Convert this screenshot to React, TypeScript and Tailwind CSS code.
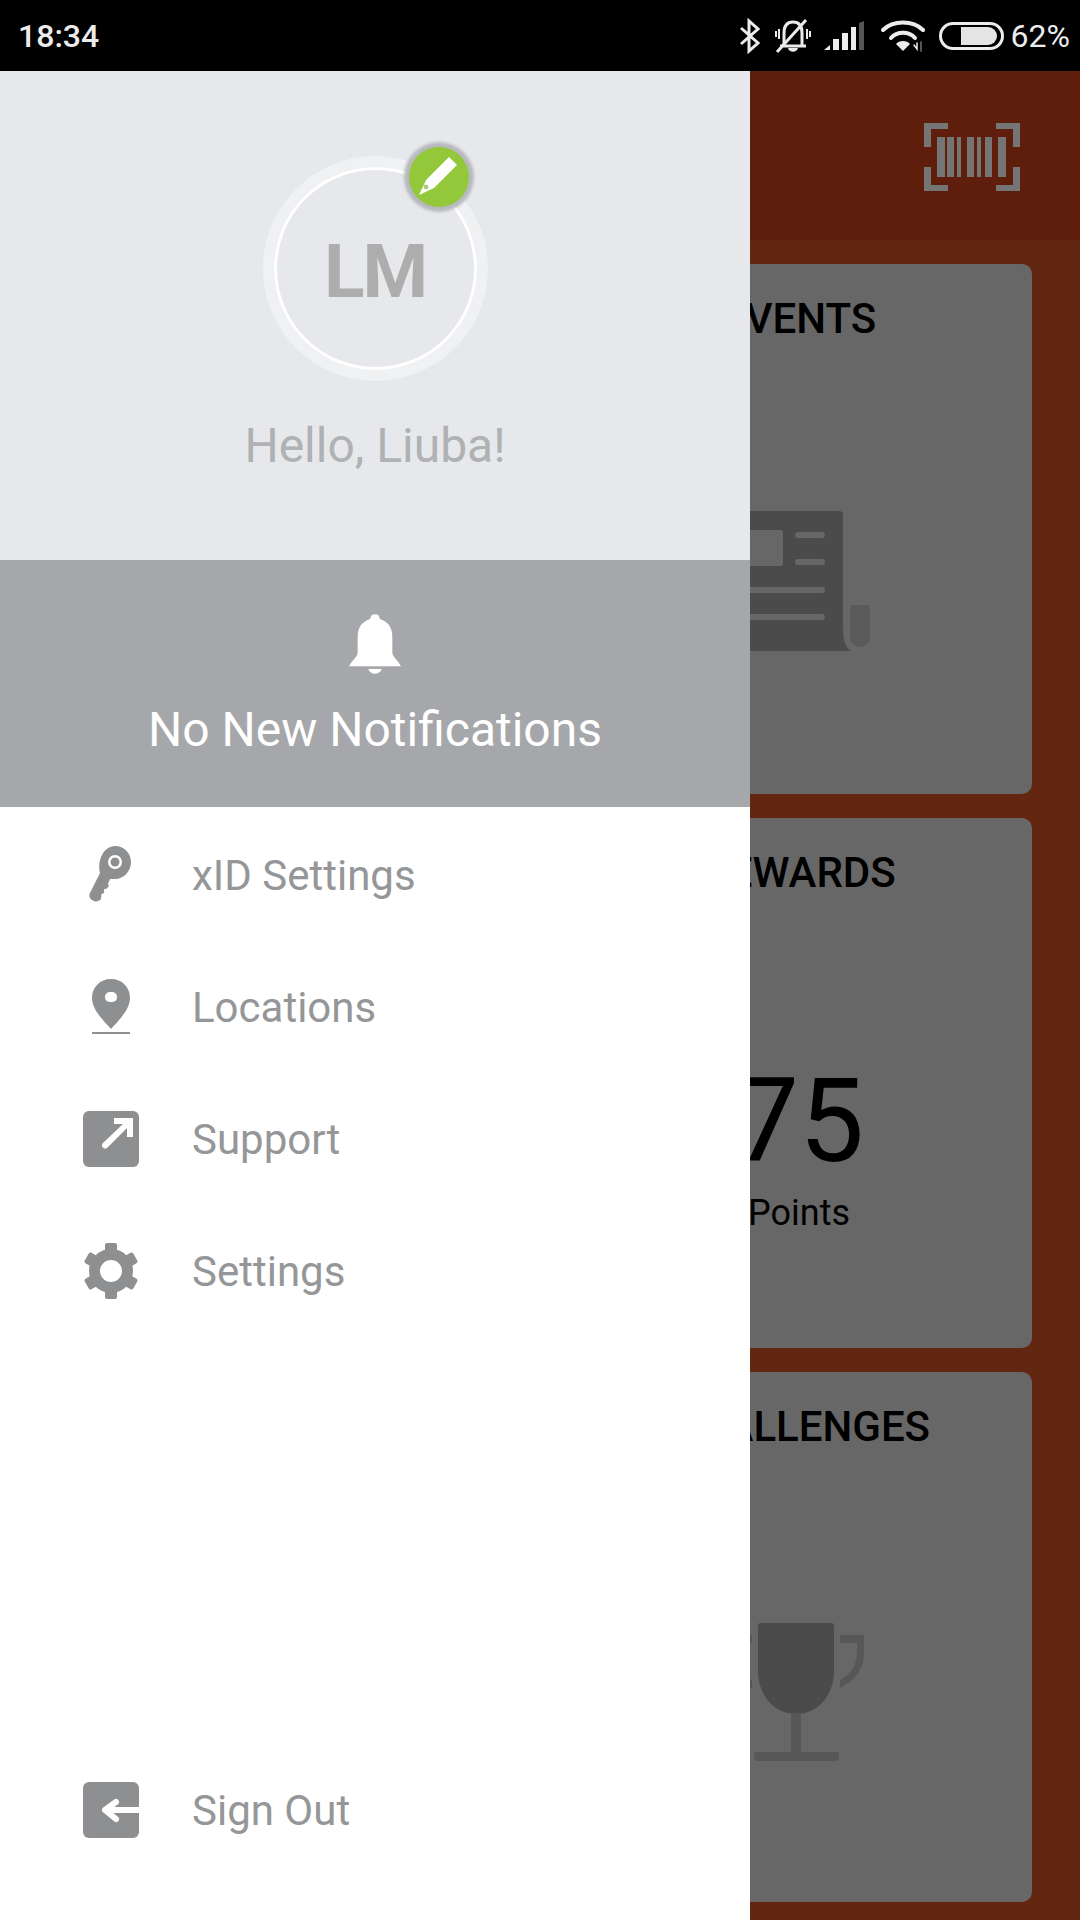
import type { ReactNode } from 'react'

function StatusIcons() {
  return (
    <div className="flex items-center">
      <svg width="22" height="36" viewBox="0 0 22 36" className="mr-[14px]" fill="none" stroke="#ececec" strokeWidth="3">
        <path d="M2 10 L19 25 L10 33 V3 L19 11 L2 26" />
      </svg>
      <svg width="36" height="34" viewBox="0 0 36 34" className="mr-[12px]" fill="none" stroke="#ececec" strokeWidth="3">
        <path d="M9 26 V14 C9 7 12 3 18 3 C24 3 27 7 27 14 V26" />
        <path d="M5 27 H31" />
        <path d="M13 29 C14 34 22 34 23 29" fill="#ececec" stroke="none" />
        <path d="M2 33 L31 1" />
        <path d="M4 10 V20 M1 12 V18 M32 10 V20 M35 12 V18" strokeWidth="2" />
      </svg>
      <svg width="42" height="30" viewBox="0 0 42 30" className="mr-[16px]">
        <path d="M1 29 L7 24 V29 Z" fill="#ececec" />
        <rect x="10" y="18" width="6" height="11" fill="#ececec" />
        <rect x="19" y="12" width="6" height="17" fill="#ececec" />
        <rect x="28" y="6" width="5" height="23" fill="#ececec" />
        <path d="M36 2 L41 0 V29 H36 Z" fill="#555" />
      </svg>
      <svg width="44" height="32" viewBox="0 0 44 32" className="mr-[14px]" fill="none" stroke="#ececec" strokeWidth="4" strokeLinecap="round">
        <path d="M2 10 C12 0 32 0 42 10" />
        <path d="M10 18 C16 11 28 11 34 18" />
        <path d="M22 31 L15 24 C18 20 26 20 29 24 Z" fill="#ececec" stroke="none" />
        <path d="M33 25 L36 29 V23" strokeWidth="1.5" />
        <path d="M40 22 V31" stroke="#555" strokeWidth="2" />
      </svg>
      <div className="mr-[7px] flex h-[28px] w-[65px] items-center justify-end rounded-full border-[3px] border-[#ececec] pr-[4px]">
        <div className="h-[18px] w-[36px] rounded-l-[3px] rounded-r-full bg-[#e4e4e4]" />
      </div>
      <span className="text-[32px] leading-none text-[#ececec]">62%</span>
    </div>
  )
}

function Barcode() {
  return (
    <svg width="96" height="68" viewBox="0 0 96 68" fill="#757575">
      <path d="M0 0 H24 V6 H7 V24 H0 Z M72 0 H96 V24 H89 V6 H72 Z M0 44 H7 V62 H24 V68 H0 Z M89 44 H96 V68 H72 V62 H89 Z" />
      <rect x="13" y="14" width="8" height="40" />
      <rect x="23" y="14" width="7" height="40" />
      <rect x="33" y="14" width="4" height="40" />
      <rect x="43" y="14" width="7" height="40" />
      <rect x="53" y="14" width="4" height="40" />
      <rect x="61" y="14" width="7" height="40" />
      <rect x="74" y="14" width="8" height="40" />
    </svg>
  )
}

function NewsIcon() {
  return (
    <svg width="138" height="140" viewBox="0 0 138 140" className="block">
      <path d="M4 0 H107 a4 4 0 0 1 4 4 V118 C111 128 113 136 119 140 H4 a4 4 0 0 1 -4 -4 V4 a4 4 0 0 1 4 -4 Z" fill="#4b4b4b" />
      <rect x="10" y="19" width="41" height="36" rx="2" fill="#676767" />
      <rect x="63" y="21" width="30" height="6" rx="3" fill="#676767" />
      <rect x="63" y="48" width="30" height="6" rx="3" fill="#676767" />
      <rect x="10" y="76" width="83" height="6" rx="3" fill="#676767" />
      <rect x="10" y="103" width="83" height="6" rx="3" fill="#676767" />
      <path d="M118 97 a3 3 0 0 1 3 -3 H135 a3 3 0 0 1 3 3 V126 a10 10 0 0 1 -20 0 Z" fill="#5a5a5a" />
    </svg>
  )
}

function CupIcon() {
  return (
    <svg width="136" height="138" viewBox="0 0 136 138" className="block">
      <path d="M30 3 a3 3 0 0 1 3 -3 H103 a3 3 0 0 1 3 3 V48 C106 72 90 91 68 91 C46 91 30 72 30 48 Z" fill="#4b4b4b" />
      <rect x="63" y="90" width="10" height="40" fill="#575757" />
      <rect x="26" y="129" width="85" height="9" rx="3" fill="#575757" />
      <path d="M112 12 H136 V29 C136 47 126 58 112 65 V57 C122 52 129 43 129 29 V20 H112 Z" fill="#575757" />
      <path d="M24 12 H0 V29 C0 47 10 58 24 65 V57 C14 52 7 43 7 29 V20 H24 Z" fill="#575757" />
    </svg>
  )
}

function Card({ title, children }: { title: string; children?: ReactNode }) {
  return (
    <div className="flex h-[530px] flex-col items-center rounded-[10px] bg-[#676767] pt-[31px]">
      <h3 className="pr-[4px] text-[42px] leading-[48px] font-medium whitespace-nowrap text-black">{title}</h3>
      <div className="flex flex-1 flex-col items-center justify-center">{children}</div>
    </div>
  )
}

function KeyIcon() {
  return (
    <svg width="44" height="58" viewBox="0 0 44 58" className="mb-[2px]">
      <path fillRule="evenodd" fill="#8e8f91" d="M26 0 C35 0 42 7 42 16 C42 25 35 33 26 33 L21 33 L19 38 L20 40 L17 43 L15 43 L15 47 L12.5 48 L12 53 C10 56 5 56 3 54 C0 52 0 49 1 47 L11 27 C8 14 15 0 26 0 Z M26 9 A7 7 0 1 0 26.01 23 A7 7 0 1 0 26 9 Z" />
      <circle cx="26" cy="16" r="4.5" fill="#8e8f91" />
    </svg>
  )
}

function PinIcon() {
  return (
    <svg width="40" height="58" viewBox="0 0 40 58">
      <path fillRule="evenodd" fill="#8e8f91" d="M20 0 C31 0 39 8 39 19 C39 31 27 42 20 50 C13 42 1 31 1 19 C1 8 9 0 20 0 Z M20 13 C16 13 14 15 14 18 C14 21 16 23 20 23 C24 23 26 21 26 18 C26 15 24 13 20 13 Z" />
      <rect x="1" y="53" width="38" height="2" fill="#8e8f91" />
    </svg>
  )
}

function SupportIcon() {
  return (
    <svg width="56" height="56" viewBox="0 0 56 56" className="mb-[3px]">
      <rect width="56" height="56" rx="6" fill="#8e8f91" />
      <path d="M31 7 H50 V26 H44 V17 L24 37 C21 39 17 35 20 32 L40 13 H31 Z" fill="#fff" />
    </svg>
  )
}

function GearIcon() {
  const teeth = [0, 60, 120, 180, 240, 300]
  return (
    <svg width="56" height="56" viewBox="0 0 56 56" className="mb-[3px]">
      {teeth.map(deg => (
        <rect key={deg} x="22" y="0" width="12" height="12" rx="2" fill="#8e8f91" transform={`rotate(${deg} 28 28)`} />
      ))}
      <circle cx="28" cy="28" r="16.5" fill="none" stroke="#8e8f91" strokeWidth="11" />
    </svg>
  )
}

function SignOutIcon() {
  return (
    <svg width="56" height="56" viewBox="0 0 56 56" className="mb-[3px]">
      <rect width="56" height="56" rx="6" fill="#8e8f91" />
      <path d="M56 28 H22 M33 20 L22 28 L33 37" fill="none" stroke="#fff" strokeWidth="6" strokeLinecap="round" strokeLinejoin="round" />
    </svg>
  )
}

function MenuRow({ icon, label }: { icon: ReactNode; label: string }) {
  return (
    <div className="flex h-[132px] items-center">
      <div className="flex w-[192px] pl-[83px]">
        <div className="flex w-[56px] items-center justify-center">{icon}</div>
      </div>
      <span className="text-[42px] leading-none text-[#959698]">{label}</span>
    </div>
  )
}

export default function App() {
  return (
    <div className="relative flex h-[1920px] w-[1080px] flex-col overflow-hidden bg-[#622611] font-['Roboto',sans-serif]">
      <header className="flex h-[71px] shrink-0 items-center justify-between bg-black pr-[10px] pl-[18px]">
        <span className="text-[32px] leading-none font-medium text-[#ececec]">18:34</span>
        <StatusIcons />
      </header>

      <div className="flex h-[169px] shrink-0 items-center justify-end bg-[#5f1e0b] pt-[3px] pr-[60px]">
        <Barcode />
      </div>

      <main className="flex flex-1 justify-end pt-[24px] pr-[48px]">
        <div className="flex w-[462px] flex-col gap-[24px]">
          <Card title="EVENTS">
            <div className="pt-[24px]"><NewsIcon /></div>
          </Card>
          <Card title="REWARDS">
            <div className="mr-[4px] flex flex-col items-center pt-[46px]">
              <span className="text-[116px] leading-[120px] font-normal text-black">75</span>
              <span className="mt-[14px] text-[36px] leading-[36px] text-black">Points</span>
            </div>
          </Card>
          <Card title="CHALLENGES">
            <div className="mr-[10px] pt-[30px]"><CupIcon /></div>
          </Card>
        </div>
      </main>

      {/* drawer sits over the dashboard */}
      <aside className="absolute top-[71px] bottom-0 left-0 flex w-[750px] flex-col bg-white">
        <section className="flex h-[489px] shrink-0 flex-col items-center bg-[#e7e8eb] pt-[85px]">
          <div className="relative flex h-[225px] w-[225px] items-center justify-center rounded-full border-[11px] border-[#f0f1f3]">
            <div className="flex h-full w-full items-center justify-center rounded-full border-[3px] border-white pt-[6px]">
              <span className="text-[75px] leading-none font-bold tracking-[-2px] text-[#adadad]">LM</span>
            </div>
            <div className="absolute top-[-20px] left-[135px] flex h-[60px] w-[60px] items-center justify-center rounded-full bg-[#93c83a] shadow-[0_0_3px_5px_#b8b9be]">
              <svg width="60" height="60" viewBox="0 0 60 60">
                <path d="M40 10 L48 18 L25 41 L10 48 L17 33 Z" fill="#fff" />
                <circle cx="17" cy="40" r="2.4" fill="#a9cc7a" />
              </svg>
            </div>
          </div>
          <p className="mt-[39px] text-[48px] leading-[52px] text-[#b0b1b3]">Hello, Liuba!</p>
        </section>

        <section className="flex h-[247px] shrink-0 flex-col items-center bg-[#a5a7aa] pt-[54px]">
          <svg width="52" height="60" viewBox="0 0 54 62">
            <path fill="#fff" d="M27 0 C30 0 32 2 32 5 C41 8 45 14 45 24 V40 C45 44 51 48 54 54 H0 C3 48 9 44 9 40 V24 C9 14 13 8 22 5 C22 2 24 0 27 0 Z" />
            <path fill="#fff" d="M20 57 H34 C33 60 30 62 27 62 C24 62 21 60 20 57 Z" />
          </svg>
          <p className="mt-[29px] text-[48px] leading-[54px] text-white">No New Notifications</p>
        </section>

        <nav className="flex flex-1 flex-col justify-between pb-[43px]">
          <div className="flex flex-col pt-[3px]">
            <MenuRow icon={<KeyIcon />} label="xID Settings" />
            <MenuRow icon={<PinIcon />} label="Locations" />
            <MenuRow icon={<SupportIcon />} label="Support" />
            <MenuRow icon={<GearIcon />} label="Settings" />
          </div>
          <MenuRow icon={<SignOutIcon />} label="Sign Out" />
        </nav>
      </aside>
    </div>
  )
}
